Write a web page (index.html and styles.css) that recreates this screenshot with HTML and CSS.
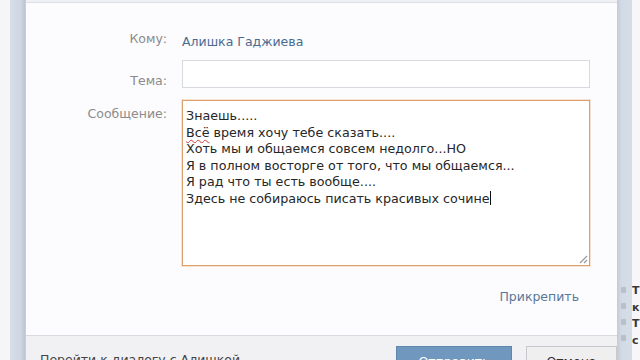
FILE: index.html
```html
<!DOCTYPE html>
<html lang="ru">
<head>
<meta charset="utf-8">
<title>Новое сообщение</title>
<link rel="stylesheet" href="styles.css">
</head>
<body>
<div class="screen">
  <div class="page-left"></div>
  <div class="strip"></div>
  <div class="dialog">
    <div class="dialog-top"></div>
    <div class="form">
      <div class="label label-to">Кому:</div>
      <div class="value-to"><a class="name">Алишка Гаджиева</a></div>

      <div class="label label-subj">Тема:</div>
      <div class="input"></div>

      <div class="label label-msg">Сообщение:</div>
      <div class="textarea">
        <div class="line">Знаешь.....</div>
        <div class="line"><span class="spell">Всё</span> время хочу тебе сказать....</div>
        <div class="line">Хоть мы и общаемся совсем недолго...НО</div>
        <div class="line">Я в полном восторге от того, что мы общаемся...</div>
        <div class="line">Я рад что ты есть вообще....</div>
        <div class="line">Здесь не собираюсь писать красивых сочине<span class="caret"></span></div>
        <svg class="grip" width="10" height="10" viewBox="0 0 10 10"><path d="M9 2 L2 9 M9 6 L6 9" stroke="#9a9a9a" stroke-width="1.2" fill="none"/></svg>
      </div>

      <div class="spacer"></div>
      <div class="attach"><a>Прикрепить</a></div>
    </div>
    <div class="footer">
      <div class="footer-note">Перейти к диалогу с Алишкой</div>
      <div class="buttons">
        <div class="btn btn-send">Отправить</div>
        <div class="btn btn-cancel">Отмена</div>
      </div>
    </div>
  </div>
  <div class="strip strip-right">
    <span class="ico"></span>
    <span class="ico"></span>
    <span class="ico"></span>
    <span class="ico"></span>
  </div>
  <div class="page-right">
    <div class="pr-item">Т</div>
    <div class="pr-item">к</div>
    <div class="pr-item">Т</div>
    <div class="pr-item">с</div>
  </div>
</div>
</body>
</html>
```

FILE: styles.css
```css
html, body {
  margin: 0;
  padding: 0;
  width: 640px;
  height: 360px;
  overflow: hidden;
  background: #f5f6f8;
  font-family: "DejaVu Sans", "Liberation Sans", sans-serif;
}

.screen {
  display: flex;
  width: 640px;
  height: 360px;
  overflow: hidden;
}

.page-left {
  width: 10px;
  flex: none;
  background: #f6f6f8;
}

.strip {
  width: 15px;
  flex: none;
  background: linear-gradient(to right, #d6dee8, #cdd6e2 70%, #bcc4cf);
}

.strip-right {
  background: linear-gradient(to right, #c3cbd6, #d2dae5 30%, #d5dde7);
  display: flex;
  flex-direction: column;
  align-items: flex-start;
  padding-top: 287px;
  padding-left: 4px;
  box-sizing: border-box;
  gap: 10px;
}

.ico {
  width: 5px;
  height: 6px;
  background: #b9c0c9;
  border-radius: 1px;
}

.page-right {
  width: 8px;
  flex: none;
  background: #f7f7f9;
  overflow: hidden;
  padding-top: 283px;
  box-sizing: border-box;
}

.pr-item {
  font-size: 11px;
  font-weight: bold;
  line-height: 16.5px;
  color: #3a3a3a;
  white-space: nowrap;
  margin-left: 0;
}

.dialog {
  width: 592px;
  flex: none;
  background: #fcfbfd;
  border-left: 1px solid #c9cdd3;
  box-sizing: border-box;
  display: flex;
  flex-direction: column;
}

.dialog-top {
  height: 2px;
  background: #eef0f3;
  border-bottom: 1px solid #dde1e6;
  flex: none;
}

.form {
  display: grid;
  grid-template-columns: 141px 408px;
  column-gap: 15px;
  padding-top: 28px;
  flex: none;
  height: 332px;
  box-sizing: border-box;
  align-content: start;
}

.label {
  text-align: right;
  font-size: 12.5px;
  line-height: 16px;
  color: #8b8b8b;
}

.label-to {
  margin-bottom: 10px;
}

.value-to {
  margin-bottom: 10px;
}

.name {
  font-size: 12.5px;
  line-height: 16px;
  color: #4a6b90;
}

.label-subj {
  align-self: center;
  margin-top: 1px;
}

.input {
  height: 28px;
  box-sizing: border-box;
  border: 1px solid #d6d9de;
  background: #ffffff;
  margin-bottom: 12px;
}

.label-msg {
  padding-top: 6px;
}

.textarea {
  position: relative;
  height: 166px;
  box-sizing: border-box;
  border: 1px solid #de9f6f;
  box-shadow: 0 0 0 1px rgba(240, 196, 160, 0.45);
  background: #ffffff;
  padding: 7px 3px;
  font-size: 12.7px;
  line-height: 16.6px;
  color: #262626;
}

.line {
  white-space: nowrap;
}

.spell {
  text-decoration: underline wavy #d23a3a;
  text-decoration-thickness: 1px;
  text-underline-offset: 2px;
}

.caret {
  display: inline-block;
  width: 1px;
  height: 14px;
  background: #111;
  vertical-align: -2px;
}

.grip {
  position: absolute;
  right: 1px;
  bottom: 1px;
}

.spacer {
  grid-column: 1;
}

.attach {
  grid-column: 2;
  text-align: right;
  padding-top: 20px;
  padding-right: 11px;
}

.attach a {
  font-size: 12.5px;
  line-height: 16px;
  color: #5a7899;
}

.footer {
  flex: 1;
  border-top: 1px solid #d9dade;
  background: #f1f1f3;
  display: flex;
  justify-content: space-between;
  padding: 10px 0 0 14px;
  box-sizing: border-box;
}

.footer-note {
  font-size: 12.5px;
  line-height: 16px;
  color: #444;
  padding-top: 6px;
  white-space: nowrap;
}

.buttons {
  display: flex;
  gap: 14px;
}

.btn {
  height: 26px;
  box-sizing: border-box;
  font-size: 12.5px;
  line-height: 24px;
  text-align: center;
  padding-top: 3px;
}

.btn-send {
  width: 116px;
  background: #7097bd;
  border: 1px solid #5f86ad;
  color: #ffffff;
}

.btn-cancel {
  width: 91px;
  background: #efeff0;
  border: 1px solid #c6c8cc;
  color: #333;
}
```
